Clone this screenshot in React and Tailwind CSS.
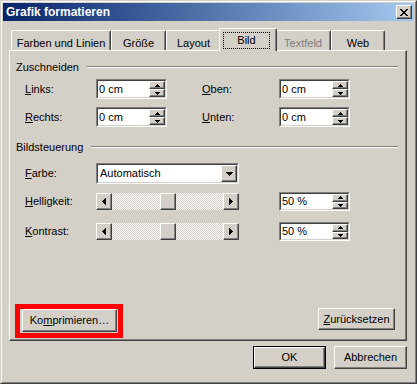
import React from 'react';

const sunkenOuter = 'border border-t-[#808080] border-l-[#808080] border-r-white border-b-white';
const sunkenInner = 'border border-t-[#404040] border-l-[#404040] border-r-[#d4d0c8] border-b-[#d4d0c8]';
const raised =
  'bg-[#d4d0c8] border border-t-white border-l-white border-r-[#404040] border-b-[#404040] shadow-[inset_-1px_-1px_#808080]';

const UpArrow = () => (
  <svg width="5" height="3" viewBox="0 0 5 3" shapeRendering="crispEdges">
    <path d="M2 0h1v1H2zM1 1h3v1H1zM0 2h5v1H0z" fill="#000" />
  </svg>
);

const DownArrow = ({ big }) =>
  big ? (
    <svg width="7" height="4" viewBox="0 0 7 4" shapeRendering="crispEdges">
      <path d="M0 0h7v1H0zM1 1h5v1H1zM2 2h3v1H2zM3 3h1v1H3z" fill="#000" />
    </svg>
  ) : (
    <svg width="5" height="3" viewBox="0 0 5 3" shapeRendering="crispEdges">
      <path d="M0 0h5v1H0zM1 1h3v1H1zM2 2h1v1H2z" fill="#000" />
    </svg>
  );

const LeftArrow = () => (
  <svg width="4" height="7" viewBox="0 0 4 7" shapeRendering="crispEdges">
    <path d="M3 0h1v7H3zM2 1h1v5H2zM1 2h1v3H1zM0 3h1v1H0z" fill="#000" />
  </svg>
);

const RightArrow = () => (
  <svg width="4" height="7" viewBox="0 0 4 7" shapeRendering="crispEdges">
    <path d="M0 0h1v7H0zM1 1h1v5H1zM2 2h1v3H2zM3 3h1v1H3z" fill="#000" />
  </svg>
);

const CloseGlyph = () => (
  <svg width="8" height="7" viewBox="0 0 8 7" shapeRendering="crispEdges">
    <path
      d="M0 0h2v1H0zM6 0h2v1H6zM1 1h2v1H1zM5 1h2v1H5zM2 2h4v1H2zM3 3h2v1H3zM2 4h4v1H2zM1 5h2v1H1zM5 5h2v1H5zM0 6h2v1H0zM6 6h2v1H6z"
      fill="#000"
    />
  </svg>
);

const Spinner = () => (
  <div className="w-[16px] h-full flex flex-col">
    <div className={`${raised} flex-1 flex items-center justify-center`}>
      <UpArrow />
    </div>
    <div className={`${raised} flex-1 flex items-center justify-center`}>
      <DownArrow />
    </div>
  </div>
);

const Field = ({ value, h }) => (
  <div className={`${sunkenOuter} w-[71px] ${h}`}>
    <div className={`${sunkenInner} h-full bg-white flex`}>
      <span className="flex-1 pl-[1px] flex items-center">{value}</span>
      <Spinner />
    </div>
  </div>
);

const Slider = () => (
  <div className="w-[143px] h-[17px] flex">
    <div className={`${raised} w-[16px] h-full flex items-center justify-center pr-[1px]`}>
      <LeftArrow />
    </div>
    <div className="flex-1 h-full pl-[48px] bg-[image:repeating-conic-gradient(#d4d0c8_0_25%,#ffffff_0_50%)] bg-[length:2px_2px]">
      <div className={`${raised} w-[16px] h-full`} />
    </div>
    <div className={`${raised} w-[16px] h-full flex items-center justify-center`}>
      <RightArrow />
    </div>
  </div>
);

const GroupHeader = ({ title, className }) => (
  <div className={`flex items-center h-[14px] pl-[6px] pr-[8px] ${className}`}>
    <span className="leading-[14px]">{title}</span>
    <div className="flex-1 ml-[8px] h-[2px] border-t border-t-[#808080] border-b border-b-white" />
  </div>
);

const Label = ({ u, rest, w }) => (
  <span className={w}>
    <u>{u}</u>
    {rest}
  </span>
);

const Tab = ({ label, w, disabled }) => (
  <div
    className={`${w} h-[20px] flex justify-center pt-[6px] leading-[13px] rounded-tl-[2px] rounded-tr-[2px] border-t border-l border-r border-t-white border-l-white border-r-[#404040] shadow-[inset_-1px_0_#808080] ${
      disabled ? 'text-[#808080]' : 'text-black'
    }`}
  >
    {label}
  </div>
);

export default function App() {
  return (
    <div className="font-['Liberation_Sans',Arial,sans-serif] w-[417px] h-[384px] bg-[#d4d0c8] text-[11px] text-black border border-t-[#d4d0c8] border-l-[#d4d0c8] border-r-[#404040] border-b-[#404040]">
      <div className="h-full flex flex-col p-[1px] border border-t-white border-l-white border-r-[#808080] border-b-[#808080]">
        {/* Title bar */}
        <div className="h-[18px] flex items-center pl-[3px] pr-[2px] bg-linear-to-r from-[#0a246a] to-[#a6caf0]">
          <span className="flex-1 text-white font-bold text-[12px] leading-[18px]">Grafik formatieren</span>
          <div className={`${raised} w-[16px] h-[14px] flex items-center justify-center`}>
            <CloseGlyph />
          </div>
        </div>

        {/* Tabs */}
        <div className="flex items-end h-[22px] mt-[7px] pl-[8px]">
          <Tab label="Farben und Linien" w="w-[100px]" />
          <Tab label="Größe" w="w-[55px]" />
          <Tab label="Layout" w="w-[55px]" />
          <div className="relative z-10 w-[58px] h-[23px] -mx-[2px] -mb-[1px] bg-[#d4d0c8] rounded-tl-[2px] rounded-tr-[2px] border-t border-l border-r border-t-white border-l-white border-r-[#404040] shadow-[inset_-1px_0_#808080] pt-[3px] pl-[3px]">
            <div className="w-[47px] h-[17px] border border-dotted border-black flex justify-center pt-[1px] leading-[13px]">
              Bild
            </div>
          </div>
          <Tab label="Textfeld" w="w-[56px]" disabled />
          <Tab label="Web" w="w-[54px]" />
        </div>

        {/* Panel */}
        <div className="ml-[6px] w-[398px] h-[291px] flex flex-col border border-t-white border-l-white border-r-[#404040] border-b-[#404040] shadow-[inset_-1px_-1px_#808080]">
          <GroupHeader title="Zuschneiden" className="mt-[9px]" />

          <div className="flex items-center h-[20px] mt-[5px] pl-[15px]">
            <Label u="L" rest="inks:" w="w-[71px]" />
            <Field value="0 cm" h="h-[20px]" />
            <Label u="O" rest="ben:" w="w-[77px] ml-[35px]" />
            <Field value="0 cm" h="h-[20px]" />
          </div>

          <div className="flex items-center h-[20px] mt-[8px] pl-[15px]">
            <Label u="R" rest="echts:" w="w-[71px]" />
            <Field value="0 cm" h="h-[20px]" />
            <Label u="U" rest="nten:" w="w-[77px] ml-[35px]" />
            <Field value="0 cm" h="h-[20px]" />
          </div>

          <GroupHeader title="Bildsteuerung" className="mt-[13px]" />

          <div className="flex items-center h-[21px] mt-[9px] pl-[15px]">
            <Label u="F" rest="arbe:" w="w-[71px]" />
            <div className={`${sunkenOuter} w-[143px] h-[21px]`}>
              <div className={`${sunkenInner} h-full bg-white flex`}>
                <span className="flex-1 pl-[2px] flex items-center">Automatisch</span>
                <div className={`${raised} w-[16px] h-full flex items-center justify-center`}>
                  <DownArrow big />
                </div>
              </div>
            </div>
          </div>

          <div className="flex items-center h-[19px] mt-[8px] pl-[15px]">
            <Label u="H" rest="elligkeit:" w="w-[71px]" />
            <Slider />
            <div className="ml-[40px]">
              <Field value="50 %" h="h-[19px]" />
            </div>
          </div>

          <div className="flex items-center h-[19px] mt-[11px] pl-[15px]">
            <Label u="K" rest="ontrast:" w="w-[71px]" />
            <Slider />
            <div className="ml-[40px]">
              <Field value="50 %" h="h-[19px]" />
            </div>
          </div>

          <div className="mt-auto pb-[2px] pl-[5px] pr-[11px] flex items-start justify-between">
            <div className="w-[108px] h-[34px] border-[5px] border-[#ff0000] pl-[2px] pr-[1px] pb-[1px]">
              <div className={`${raised} w-full h-full flex items-center justify-center`}>
                <span>
                  Ko<u>m</u>primieren…
                </span>
              </div>
            </div>
            <div className={`${raised} mt-[4px] w-[77px] h-[22px] flex items-center justify-center`}>
              <span>
                <u>Z</u>urücksetzen
              </span>
            </div>
          </div>
        </div>

        {/* Dialog buttons */}
        <div className="flex justify-end gap-[8px] mt-[5px] pr-[7px]">
          <div className="w-[73px] h-[23px] border border-black">
            <div className={`${raised} w-full h-full flex items-center justify-center`}>OK</div>
          </div>
          <div className={`${raised} w-[73px] h-[23px] flex items-center justify-center`}>Abbrechen</div>
        </div>
      </div>
    </div>
  );
}
